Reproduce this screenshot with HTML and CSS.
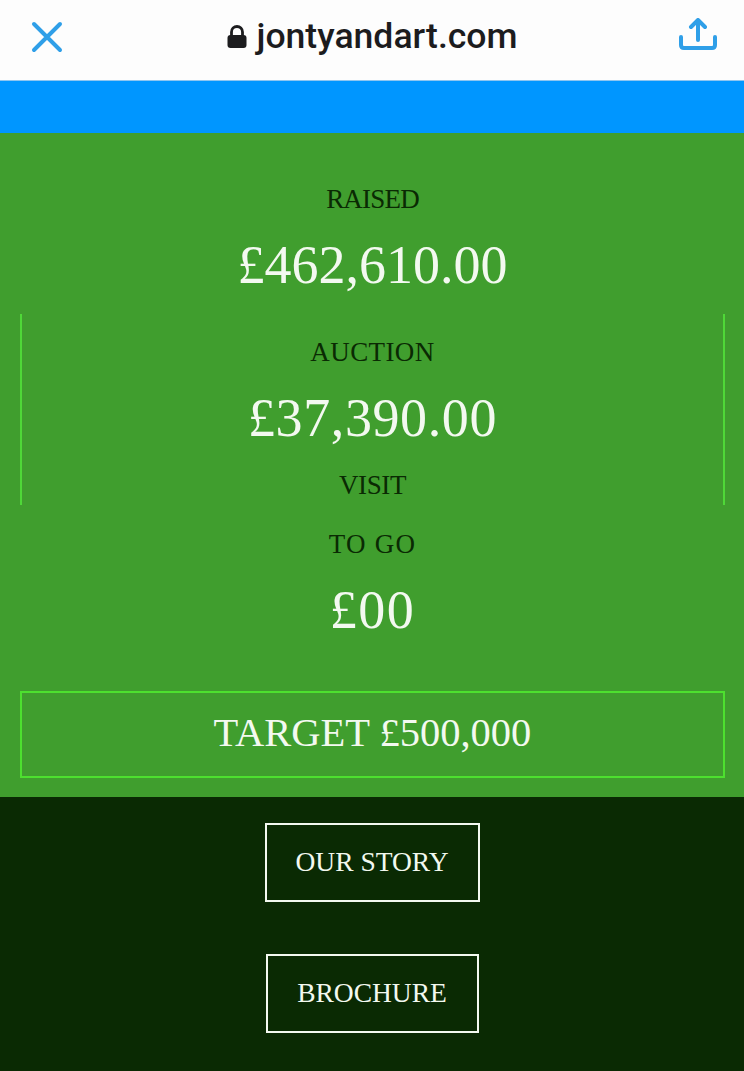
FILE: index.html
```html
<!DOCTYPE html>
<html lang="en">
<head>
<meta charset="utf-8">
<title>jontyandart.com</title>
<link rel="stylesheet" href="styles.css">
</head>
<body>
<header class="browser">
  <svg class="icon" width="38" height="38" viewBox="0 0 38 38" aria-hidden="true"><path class="stroke" d="M6 7 L32 33 M32 7 L6 33"/></svg>
  <div class="address">
    <svg width="20" height="24" viewBox="0 0 20 24" aria-hidden="true"><path class="lock-bow" d="M4.500 12 V8 a5.500 5.500 0 0 1 11 0 V12"/><rect class="lock-body" x="0.500" y="11" width="19" height="13" rx="3"/></svg>
    <span class="domain">jontyandart.com</span>
  </div>
  <svg class="icon" width="38" height="36" viewBox="0 0 38 36" aria-hidden="true"><path class="stroke" d="M2 19 V27 Q2 30 5 30 H33 Q36 30 36 27 V19 M19 22 V3 M12 9 L19 2 L26 9"/></svg>
</header>
<div class="strip"></div>
<main class="totals">
  <section>
    <div class="label raised">RAISED</div>
    <div class="value">£462,610.00</div>
  </section>
  <section class="framed">
    <div class="label auction">AUCTION</div>
    <div class="value wide">£37,390.00</div>
    <div class="label visit">VISIT</div>
  </section>
  <section class="togo">
    <div class="label togo-label">TO GO</div>
    <div class="value widest">£00</div>
  </section>
  <div class="target">TARGET £500,000</div>
</main>
<footer class="links">
  <a class="button story" href="#">OUR STORY</a>
  <a class="button brochure" href="#">BROCHURE</a>
</footer>
</body>
</html>
```
FILE: styles.css
```css
* { box-sizing: border-box; }
html, body { margin: 0; padding: 0; }
body { width: 744px; font-family: "Liberation Serif", serif; background: #0a2a03; }
.browser {
  height: 81px;
  background: #fdfdfd;
  border-bottom: 1px solid #8fc6f0;
  display: flex;
  align-items: center;
  justify-content: space-between;
  padding: 0 27px 8px 28px;
}
.icon { display: block; flex: none; }
.stroke { fill: none; stroke: #2f9fe8; stroke-width: 4; stroke-linecap: round; stroke-linejoin: round; }
.address { display: flex; align-items: center; gap: 9px; }
.lock-bow { fill: none; stroke: #1c1c1e; stroke-width: 2.800; }
.lock-body { fill: #1c1c1e; }
.domain { font-family: Roboto, sans-serif; font-weight: 500; font-size: 35.600px; line-height: 40px; color: #1c1c1e; }
.strip { height: 52px; background: #0096ff; }
.totals { background: #409e2e; padding: 46px 19px 19px 20px; text-align: center; }
.label { font-size: 27px; line-height: 40px; color: #0a2a03; }
.raised { letter-spacing: -0.800px; }
.auction { letter-spacing: 0.400px; }
.togo-label { letter-spacing: 1.200px; }
.value { font-size: 54px; line-height: 92px; color: #f3f9f0; }
.wide { letter-spacing: 0.600px; }
.widest { letter-spacing: 1.500px; }
.framed {
  margin-top: 3px;
  height: 191px;
  padding-top: 18px;
  border-left: 2px solid #4fd838;
  border-right: 2px solid #4fd838;
}
.visit { margin-top: 1px; letter-spacing: -0.400px; }
.togo { margin-top: 19px; }
.target {
  margin-top: 35px;
  height: 87px;
  border: 2px solid #4de02f;
  color: #f3f9f0;
  font-size: 40.500px;
  line-height: 79px;
}
.links {
  display: flex;
  flex-direction: column;
  align-items: center;
  gap: 52px;
  padding: 26px 0 38px;
}
.button {
  display: block;
  height: 79px;
  border: 2px solid #f3f9f0;
  color: #f3f9f0;
  font-size: 27.500px;
  line-height: 74px;
  text-align: center;
  text-decoration: none;
}
.story { width: 215px; }
.brochure { width: 213px; }
```
